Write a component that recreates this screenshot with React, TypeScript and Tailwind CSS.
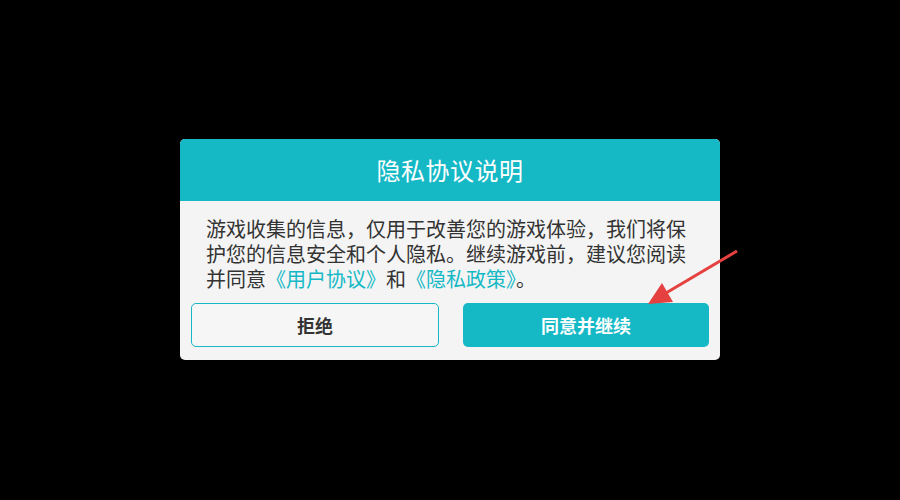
import React from "react";

export default function App() {
  const font = { fontFamily: '"Noto Sans CJK SC", "Noto Sans", sans-serif' };
  return (
    <div className="relative w-[900px] h-[500px] bg-black flex items-center justify-center" style={font}>
      <div className="w-[540px] rounded-[5px] overflow-hidden bg-[#f4f4f4] flex flex-col mt-[-1px]">
        <div className="h-[62px] bg-[#15b9c6] flex items-center justify-center text-white text-[24px] tracking-[0.5px] leading-none">
          隐私协议说明
        </div>
        <div className="pt-[15px] pb-[13px] px-[11px] flex flex-col gap-[12px]">
          <p className="px-[15px] text-[20px] leading-[25px] text-[#333333]">
            游戏收集的信息，仅用于改善您的游戏体验，我们将保护您的信息安全和个人隐私。继续游戏前，建议您阅读并同意
            <span className="text-[#15b9c6]">《用户协议》</span>和<span className="text-[#15b9c6]">《隐私政策》</span>。
          </p>
          <div className="flex gap-[24px]">
            <button className="flex-1 h-[44px] rounded-[5px] border border-[#15b9c6] bg-[#f6f6f6] text-[#333333] text-[18px] font-bold">
              拒绝
            </button>
            <button className="flex-1 h-[44px] rounded-[5px] bg-[#15b9c6] text-white text-[18px] font-bold">
              同意并继续
            </button>
          </div>
        </div>
      </div>
      <svg className="absolute left-0 top-0" width="900" height="500" viewBox="0 0 900 500">
        <line x1="737" y1="251" x2="666" y2="293" stroke="#e64141" strokeWidth="3" />
        <polygon points="648,304 662,283 673,302" fill="#e64141" />
      </svg>
    </div>
  );
}
